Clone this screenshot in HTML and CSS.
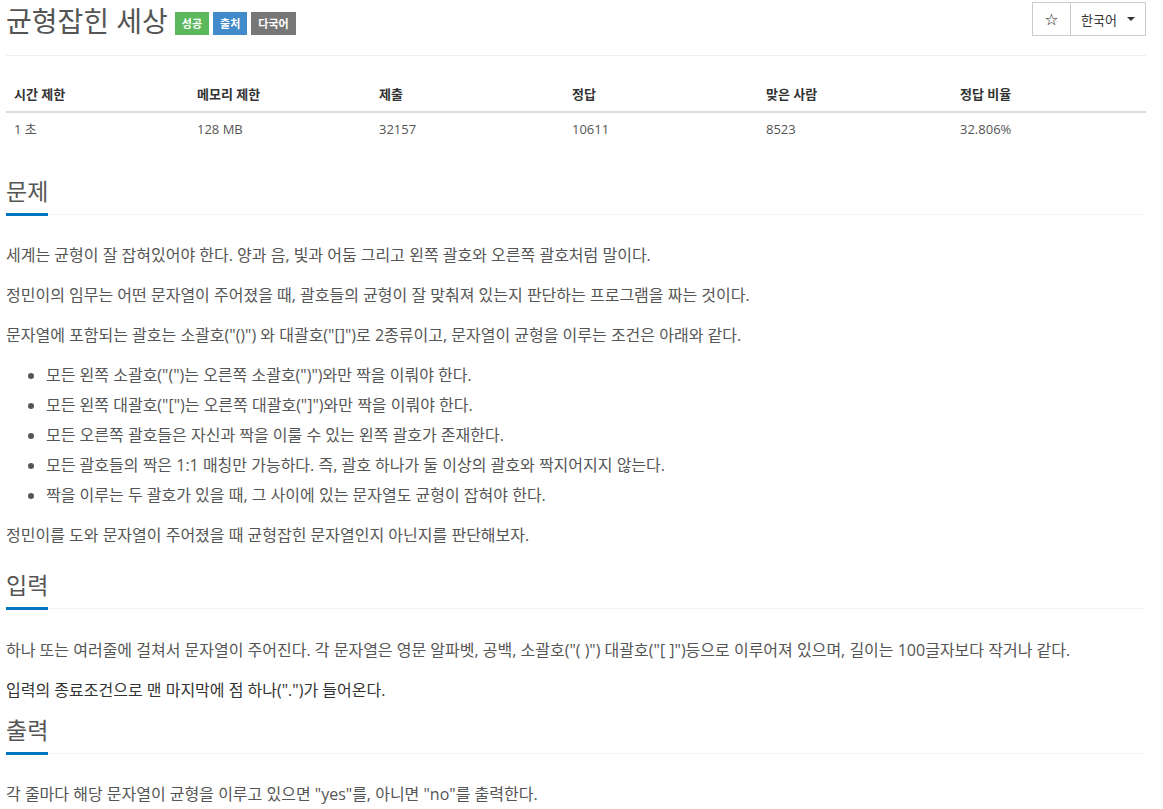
FILE: index.html
```html
<!DOCTYPE html>
<html lang="ko">
<head>
<meta charset="utf-8">
<title>균형잡힌 세상</title>
<link rel="stylesheet" href="styles.css">
</head>
<body>
<div class="page">
  <div class="page-header">
    <div class="title-wrap">
      <h1 class="title">균형잡힌 세상</h1>
      <span class="label label-success">성공</span>
      <span class="label label-primary">출처</span>
      <span class="label label-default">다국어</span>
    </div>
    <div class="btn-group">
      <span class="btn btn-star">☆</span>
      <span class="btn btn-lang">한국어 <span class="caret"></span></span>
    </div>
  </div>

  <div class="info-table">
    <div class="row head">
      <div class="cell">시간 제한</div>
      <div class="cell">메모리 제한</div>
      <div class="cell">제출</div>
      <div class="cell">정답</div>
      <div class="cell">맞은 사람</div>
      <div class="cell">정답 비율</div>
    </div>
    <div class="row">
      <div class="cell">1 초</div>
      <div class="cell">128 MB</div>
      <div class="cell">32157</div>
      <div class="cell">10611</div>
      <div class="cell">8523</div>
      <div class="cell">32.806%</div>
    </div>
  </div>

  <section class="section">
    <div class="headline"><h2>문제</h2></div>
    <div class="problem-text">
      <p>세계는 균형이 잘 잡혀있어야 한다. 양과 음, 빛과 어둠 그리고 왼쪽 괄호와 오른쪽 괄호처럼 말이다.</p>
      <p>정민이의 임무는 어떤 문자열이 주어졌을 때, 괄호들의 균형이 잘 맞춰져 있는지 판단하는 프로그램을 짜는 것이다.</p>
      <p>문자열에 포함되는 괄호는 소괄호("()") 와 대괄호("[]")로 2종류이고, 문자열이 균형을 이루는 조건은 아래와 같다.</p>
      <ul>
        <li>모든 왼쪽 소괄호("(")는 오른쪽 소괄호(")")와만 짝을 이뤄야 한다.</li>
        <li>모든 왼쪽 대괄호("[")는 오른쪽 대괄호("]")와만 짝을 이뤄야 한다.</li>
        <li>모든 오른쪽 괄호들은 자신과 짝을 이룰 수 있는 왼쪽 괄호가 존재한다.</li>
        <li>모든 괄호들의 짝은 1:1 매칭만 가능하다. 즉, 괄호 하나가 둘 이상의 괄호와 짝지어지지 않는다.</li>
        <li>짝을 이루는 두 괄호가 있을 때, 그 사이에 있는 문자열도 균형이 잡혀야 한다.</li>
      </ul>
      <p>정민이를 도와 문자열이 주어졌을 때 균형잡힌 문자열인지 아닌지를 판단해보자.</p>
    </div>
  </section>

  <section class="section">
    <div class="headline"><h2>입력</h2></div>
    <div class="problem-text spaced">
      <p>하나 또는 여러줄에 걸쳐서 문자열이 주어진다. 각 문자열은 영문 알파벳, 공백, 소괄호("( )") 대괄호("[ ]")등으로 이루어져 있으며, 길이는 100글자보다 작거나 같다.</p>
      <p class="last dark">입력의 종료조건으로 맨 마지막에 점 하나(".")가 들어온다.</p>
    </div>
  </section>

  <section class="section">
    <div class="headline"><h2>출력</h2></div>
    <div class="problem-text">
      <p>각 줄마다 해당 문자열이 균형을 이루고 있으면 "yes"를, 아니면 "no"를 출력한다.</p>
    </div>
  </section>
</div>
</body>
</html>
```

FILE: styles.css
```css
html, body {
  margin: 0;
  padding: 0;
  background: #fff;
}

.page {
  width: 1140px;
  margin-left: 6px;
  font-family: "Open Sans", "Noto Sans CJK KR", sans-serif;
  color: #555;
  font-size: 14px;
}

.page-header {
  display: flex;
  justify-content: space-between;
  align-items: flex-start;
  height: 55px;
  border-bottom: 1px solid #eee;
}

.title-wrap {
  display: flex;
  align-items: center;
  gap: 4px;
  padding-top: 4px;
}

.title {
  margin: 0 3px 0 0;
  font-size: 28px;
  font-weight: 400;
  line-height: 34px;
  color: #555;
}

.label {
  display: inline-block;
  height: 23px;
  line-height: 23px;
  padding: 0 7px;
  font-size: 11px;
  font-weight: 700;
  color: #fff;
  margin-top: 4px;
}

.label-success { background: #5cb85c; }
.label-primary { background: #428bca; }
.label-default { background: #777; }

.btn-group {
  display: flex;
  margin-top: 2px;
}

.btn {
  display: inline-flex;
  align-items: center;
  justify-content: center;
  height: 32px;
  border: 1px solid #ccc;
  background: #fff;
  color: #333;
  font-size: 13px;
}

.btn-star {
  width: 37px;
  font-family: "DejaVu Sans", sans-serif;
  font-size: 16px;
  color: #222;
}

.btn-lang {
  width: 74px;
  border-left: none;
  gap: 10px;
}

.caret {
  display: inline-block;
  width: 0;
  height: 0;
  border-top: 4px solid #333;
  border-left: 4px solid transparent;
  border-right: 4px solid transparent;
}

.info-table {
  margin-top: 22px;
  margin-bottom: 20px;
  font-size: 13px;
}

.row {
  display: grid;
  grid-template-columns: 183px 182px 193px 194px 194px 194px;
}

.row .cell {
  padding: 8px;
  line-height: 17px;
}

.row.head {
  border-bottom: 2px solid #ddd;
}

.row.head .cell {
  font-weight: 700;
  color: #333;
}

.headline {
  border-bottom: 1px dotted #e4e9f0;
}

.headline h2 {
  display: inline-block;
  margin: 0 0 -2px;
  padding: 10px 0 7px;
  font-size: 23px;
  font-weight: 400;
  line-height: 30px;
  color: #555;
  border-bottom: 3px solid #0076c0;
}

.problem-text {
  padding-top: 25px;
  font-size: 16px;
  line-height: 30px;
}

.problem-text.spaced {
  padding-top: 26px;
}

.problem-text p {
  margin: 0 0 10px;
}

.problem-text p.last {
  margin-bottom: 0;
}

.problem-text p.dark {
  color: #333;
}

.problem-text ul {
  margin: 0 0 10px;
  padding-left: 40px;
}
```
